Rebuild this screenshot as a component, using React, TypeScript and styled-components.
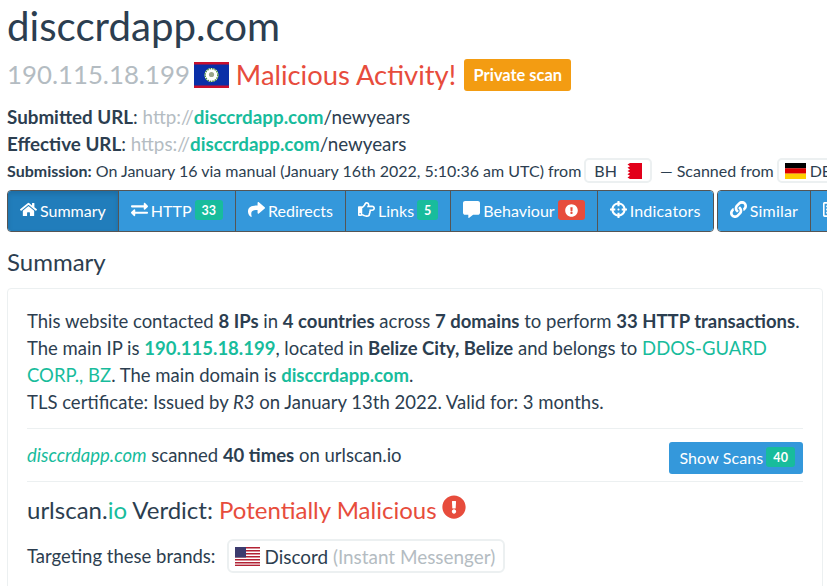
import React from "react";
import styled, { createGlobalStyle } from "styled-components";
import { FaCrosshairs, FaExclamationCircle, FaExchangeAlt, FaHome, FaLink, FaRegHandPointRight, FaShare, FaCommentAlt, FaRegListAlt } from "react-icons/fa";

const Global = createGlobalStyle`
  html, body {
    margin: 0;
    padding: 0;
    height: 586px;
    overflow: hidden;
    background: #fff;
  }
  body {
    font-family: Lato, "Liberation Sans", sans-serif;
    font-size: 18.5px;
    line-height: 27px;
    color: #2c3e50;
  }
`;

const Page = styled.div`
  width: 827px;
  height: 586px;
  padding: 0 4px 0 7px;
  box-sizing: border-box;
  overflow: hidden;
`;

const Title = styled.h1`
  margin: 0;
  padding-top: 3px;
  font-size: 40.2px;
  line-height: 46px;
  font-weight: 400;
`;

const SubTitle = styled.div`
  display: flex;
  align-items: center;
  height: 33px;
  margin-top: 9px;
  white-space: nowrap;
`;

const Ip = styled.span`
  color: #b4bcc2;
  font-size: 25.8px;
  margin-right: 4px;
`;

const Danger = styled.span`
  color: #e74c3c;
`;

const Headline = styled(Danger)`
  font-size: 27.4px;
  margin: 0 8px 0 7px;
`;

const PrivateBadge = styled.span`
  padding: 0 9.5px;
  height: 32px;
  line-height: 32px;
  border-radius: 3px;
  background: #f39c12;
  color: #fff;
  font-size: 16.4px;
  font-weight: 700;
`;

const UrlBlock = styled.div`
  margin-top: 12px;
  font-size: 18.8px;
  white-space: nowrap;
`;

const Muted = styled.span`
  color: #b4bcc2;
`;

const Domain = styled.span`
  color: #18bc9c;
  font-weight: 700;
`;

const Submission = styled.div`
  display: flex;
  align-items: center;
  height: 27px;
  font-size: 16px;
  white-space: nowrap;
  gap: 3px;
`;

const Pill = styled.span`
  display: inline-flex;
  align-items: center;
  gap: 8px;
  height: 21px;
  padding: 0 8px;
  border: 2px solid #ecf0f1;
  border-radius: 5px;
  background: #fff;
  margin-right: 5px;
`;

const FlagPill = styled(Pill)`
  gap: 4px;
  padding-left: 6px;
  margin-right: 0;
`;

const Tabs = styled.nav`
  display: flex;
  gap: 3px;
  margin-top: 6px;
  width: 1000px;
`;

const Group = styled.div`
  display: flex;
  height: 42px;
  box-sizing: border-box;
  border: 1px solid #555;
  border-radius: 4px;
  overflow: hidden;
`;

const Tab = styled.a<{ $active?: boolean; $wide?: boolean }>`
  display: flex;
  align-items: center;
  gap: 2px;
  padding: 0 12px 2px;
  background: ${(p) => (p.$active ? "#217dbb" : "#3498db")};
  box-shadow: ${(p) => (p.$active ? "inset 0 3px 5px rgba(0,0,0,.125)" : "none")};
  color: #fff;
  font-size: 16px;
  letter-spacing: ${(p) => (p.$wide ? "0.2px" : "normal")};
  white-space: nowrap;
  & + & {
    border-left: 1px solid #555;
  }
  svg {
    font-size: 17px;
    margin-right: 1px;
    margin-top: -1px;
  }
`;

const Count = styled.span<{ $red?: boolean }>`
  display: inline-flex;
  align-items: center;
  justify-content: center;
  height: 20px;
  padding: 0 7px;
  margin-left: 1px;
  border-radius: 3px;
  background: ${(p) => (p.$red ? "#e74c3c" : "#18bc9c")};
  color: #fff;
  font-size: 12.5px;
  font-weight: 700;
  svg {
    font-size: 13px;
    margin: 0;
  }
`;

const SectionTitle = styled.h3`
  margin: 0;
  height: 56px;
  padding-top: 17px;
  box-sizing: border-box;
  font-size: 24px;
  line-height: 26px;
  font-weight: 400;
`;

const Panel = styled.section`
  border: 1px solid #ecf0f1;
  border-radius: 4px;
  padding: 19px 19px 0;
  height: 320px;
  box-sizing: border-box;
`;

const Lead = styled.p`
  margin: 0;
  padding-bottom: 12px;
  white-space: nowrap;
`;

const ScanRow = styled.div`
  display: flex;
  justify-content: space-between;
  align-items: flex-start;
  height: 54px;
  box-sizing: border-box;
  padding-top: 13px;
  border-top: 1px solid #ecf0f1;
  border-bottom: 1px solid #ecf0f1;
`;

const GreenItalic = styled.em`
  color: #18bc9c;
`;

const ScanButton = styled.button`
  display: flex;
  align-items: center;
  gap: 2px;
  height: 32px;
  padding: 0 8px 2px 10px;
  border: 0;
  border-radius: 3px;
  background: #3498db;
  color: #fff;
  font-family: inherit;
  font-size: 16px;
  letter-spacing: 0.1px;
`;

const Verdict = styled.h3`
  display: flex;
  align-items: center;
  gap: 5px;
  margin: 0;
  height: 60px;
  padding-bottom: 5px;
  box-sizing: border-box;
  font-size: 24px;
  font-weight: 400;
  white-space: nowrap;
  svg {
    font-size: 24px;
    color: #e74c3c;
    margin-top: -5px;
  }
`;

const Green = styled.span`
  color: #18bc9c;
`;

const Brands = styled.div`
  display: flex;
  align-items: center;
  gap: 12px;
  height: 34px;
  margin-top: -3px;
`;

const BrandPill = styled.span`
  display: inline-flex;
  align-items: center;
  gap: 4px;
  height: 34px;
  padding: 0 8px 0 6px;
  border: 2px solid #ecf0f1;
  border-radius: 6px;
  box-sizing: border-box;
  font-size: 18.9px;
`;

const Grey = styled.span`
  color: #b4bcc2;
`;

const BelizeFlag = () => (
  <svg width="35" height="26" viewBox="0 0 35 26">
    <rect width="35" height="26" fill="#c8102e" />
    <rect y="2.5" width="35" height="21" fill="#0a2fa8" />
    <circle cx="17.5" cy="13" r="7" fill="#fff" />
    <circle cx="17.5" cy="13" r="6.4" fill="none" stroke="#4a8a3a" strokeWidth="1.5" strokeDasharray="1.5 1" />
    <circle cx="17.5" cy="12.5" r="2.6" fill="#9aa58a" />
  </svg>
);

const BahrainFlag = () => (
  <svg width="17" height="16" viewBox="0 0 17 16">
    <rect width="17" height="16" fill="#e2001a" />
    <path d="M0 0h5L2.5 1.6 5 3.2 2.5 4.8 5 6.4 2.5 8 5 9.6 2.5 11.2 5 12.8 2.5 14.4 5 16H0z" fill="#fff" />
  </svg>
);

const GermanFlag = () => (
  <svg width="21" height="16" viewBox="0 0 21 16">
    <rect width="21" height="5.4" fill="#000" />
    <rect y="5.3" width="21" height="5.4" fill="#d00" />
    <rect y="10.6" width="21" height="5.4" fill="#ffce00" />
  </svg>
);

const UsFlag = () => (
  <svg width="25" height="19" viewBox="0 0 25 19">
    <rect width="25" height="19" fill="#fff" />
    {[0, 3, 6, 9, 12, 15, 17.6].map((y) => (
      <rect key={y} y={y} width="25" height="1.5" fill="#b22234" />
    ))}
    <rect width="11" height="10.5" fill="#3c3b6e" />
  </svg>
);

export default function App() {
  return (
    <Page>
      <Global />
      <Title>disccrdapp.com</Title>
      <SubTitle>
        <Ip>190.115.18.199</Ip>
        <BelizeFlag />
        <Headline>Malicious Activity!</Headline>
        <PrivateBadge>Private scan</PrivateBadge>
      </SubTitle>
      <UrlBlock>
        <b>Submitted URL</b>: <Muted>http://</Muted>
        <Domain>disccrdapp.com</Domain>/newyears
        <br />
        <b>Effective URL</b>: <Muted>https://</Muted>
        <Domain>disccrdapp.com</Domain>/newyears
      </UrlBlock>
      <Submission>
        <span>
          <b>Submission:</b> On January 16 via manual (January 16th 2022, 5:10:36 am UTC) from
        </span>
        <Pill>
          BH <BahrainFlag />
        </Pill>
        <span>— Scanned from</span>
        <FlagPill>
          <GermanFlag /> DE
        </FlagPill>
      </Submission>
      <Tabs>
        <Group>
          <Tab $active>
            <FaHome />
            Summary
          </Tab>
          <Tab>
            <FaExchangeAlt />
            HTTP <Count>33</Count>
          </Tab>
          <Tab>
            <FaShare />
            Redirects
          </Tab>
          <Tab>
            <FaRegHandPointRight />
            Links <Count>5</Count>
          </Tab>
          <Tab>
            <FaCommentAlt />
            Behaviour
            <Count $red>
              <FaExclamationCircle />
            </Count>
          </Tab>
          <Tab $wide>
            <FaCrosshairs />
            Indicators
          </Tab>
        </Group>
        <Group>
          <Tab $wide>
            <FaLink />
            Similar
          </Tab>
          <Tab>
            <FaRegListAlt />
            DOM
          </Tab>
        </Group>
      </Tabs>
      <SectionTitle>Summary</SectionTitle>
      <Panel>
        <Lead>
          This website contacted <b>8 IPs</b> in <b>4 countries</b> across <b>7 domains</b> to perform{" "}
          <b>33 HTTP transactions</b>.
          <br />
          The main IP is <Domain>190.115.18.199</Domain>, located in <b>Belize City, Belize</b> and belongs to{" "}
          <Green>DDOS-GUARD</Green>
          <br />
          <Green>CORP., BZ</Green>. The main domain is <Domain>disccrdapp.com</Domain>.
          <br />
          TLS certificate: Issued by <i>R3</i> on January 13th 2022. Valid for: 3 months.
        </Lead>
        <ScanRow>
          <span>
            <GreenItalic>disccrdapp.com</GreenItalic> scanned <b>40 times</b> on urlscan.io
          </span>
          <ScanButton>
            Show Scans <Count>40</Count>
          </ScanButton>
        </ScanRow>
        <Verdict>
          <span>
            urlscan.<Green>io</Green> Verdict: <Danger>Potentially Malicious</Danger>
          </span>
          <FaExclamationCircle />
        </Verdict>
        <Brands>
          Targeting these brands:
          <BrandPill>
            <UsFlag />
            <span>
              Discord <Grey>(Instant Messenger)</Grey>
            </span>
          </BrandPill>
        </Brands>
      </Panel>
    </Page>
  );
}
